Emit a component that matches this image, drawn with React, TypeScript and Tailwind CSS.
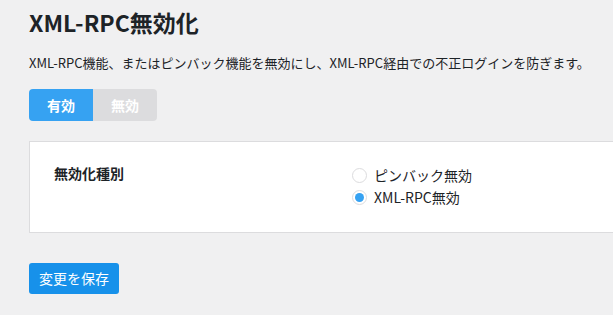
import React from "react";

export default function App() {
  return (
    <div
      className="w-[613px] h-[315px] overflow-hidden bg-[#f0f0f1] text-[#1d2327]"
      style={{ fontFamily: '"Noto Sans CJK JP", "Noto Sans", sans-serif' }}
    >
      <div className="pl-[29px] pt-[6px]">
        <h1 className="text-[23px] font-bold leading-[32px] m-0">XML-RPC無効化</h1>
        <p className="text-[13px] leading-[20px] mt-[15px]">
          XML-RPC機能、またはピンバック機能を無効にし、XML-RPC経由での不正ログインを防ぎます。
        </p>
        <div className="flex mt-[16px] w-[128px] h-[32px] rounded-[4px] overflow-hidden">
          <button className="w-[64px] h-full bg-[#36a2f2] text-white text-[14px] font-bold">有効</button>
          <button className="w-[64px] h-full bg-[#dcdcde] text-white text-[14px] font-bold">無効</button>
        </div>
        <div className="mt-[20px] w-[700px] h-[92px] bg-white border border-[#dcdcde] flex">
          <div className="w-[322px] pl-[24px] pt-[21px] text-[14px] font-bold leading-[20px]">無効化種別</div>
          <div className="pt-[23px] flex flex-col gap-[2px]">
            <label className="flex items-center gap-[7px] text-[14px] leading-[20px]">
              <span className="w-[15px] h-[15px] rounded-full border border-[#dcdcde] bg-white"></span>
              ピンバック無効
            </label>
            <label className="flex items-center gap-[7px] text-[14px] leading-[20px]">
              <span className="w-[15px] h-[15px] rounded-full border border-[#dcdcde] bg-white flex items-center justify-center">
                <span className="w-[9px] h-[9px] rounded-full bg-[#36a2f2]"></span>
              </span>
              XML-RPC無効
            </label>
          </div>
        </div>
        <button className="mt-[30px] w-[90px] h-[31px] rounded-[3px] bg-[#1791ea] text-white text-[14px]">
          変更を保存
        </button>
      </div>
    </div>
  );
}
